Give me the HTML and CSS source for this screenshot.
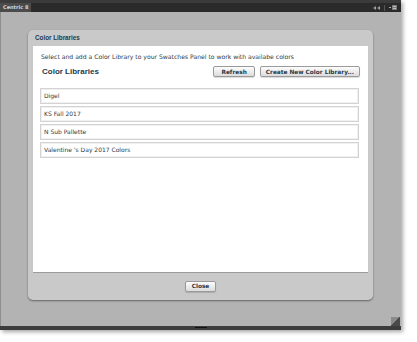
FILE: index.html
```html
<!DOCTYPE html>
<html lang="en">
<head>
  <meta charset="UTF-8" />
  <title>Centric 8 - Color Libraries</title>
  <link rel="stylesheet" href="styles.css">
</head>
<body>
<div class="window">
  <div class="topline"></div>
  <div class="tabbar">
    <div class="tab">Centric 8</div>
    <div class="tab-tools">
      <svg class="collapse" width="7" height="4" viewBox="0 0 7 4"><path d="M3 0L0 2L3 4Z M7 0L4 2L7 4Z" fill="#9a9a9a"/></svg>
      <span class="sep"></span>
      <svg class="menu" width="8" height="5" viewBox="0 0 8 5"><rect x="0" y="2" width="2" height="1" fill="#aaa"/><rect x="3" y="0" width="5" height="5" fill="#7a7a7a"/><rect x="4" y="1" width="3" height="1" fill="#bbb"/><rect x="4" y="3" width="3" height="1" fill="#bbb"/></svg>
    </div>
  </div>

  <div class="panel">
    <div class="dialog">
      <div class="dialog-title">Color Libraries</div>
      <div class="dialog-body">
        <p class="intro">Select and add a Color Library to your Swatches Panel to work with availabe colors</p>
        <div class="head-row">
          <h2>Color Libraries</h2>
          <div class="actions">
            <button class="btn">Refresh</button>
            <button class="btn">Create New Color Library...</button>
          </div>
        </div>
        <ul class="libs">
          <li>Digel</li>
          <li>KS Fall 2017</li>
          <li>N Sub Pallette</li>
          <li>Valentine 's Day 2017 Colors</li>
        </ul>
      </div>
      <div class="dialog-foot">
        <button class="btn">Close</button>
      </div>
    </div>
  </div>

  <div class="bottombar"><span class="grip-notch"></span></div>
  <span class="resize-grip"></span>
</div>
</body>
</html>
```

FILE: styles.css
```css
* { margin: 0; padding: 0; box-sizing: border-box; font-family: 'DejaVu Sans', Verdana, sans-serif; }
body { background: #fff; width: 417px; height: 342px; overflow: hidden; }

.window { position: relative; width: 401px; height: 330px; display: flex; flex-direction: column; box-shadow: 2px 2px 4px rgba(0,0,0,0.35); }
.topline { height: 3px; background: #3b3b3b; }
.tabbar { height: 9px; background: #2a2a2a; display: flex; justify-content: space-between; align-items: center; }
.tab { height: 9px; width: 31px; background: #4b4b4b; color: #d6d6d6; font-size: 5px; font-weight: bold; line-height: 9px; padding-left: 3px; }
.tab-tools { display: flex; align-items: center; gap: 3px; padding-right: 4px; }
.tab-tools .sep { width: 1px; height: 6px; background: #555; margin: 0 1px; }

.panel { flex: 1; background: #b3b3b3; border-left: 1px solid #8e8e8e; padding: 18px 0 0 27px; }
.dialog { width: 345px; height: 270px; background: #c9c9c9; border-radius: 5px; box-shadow: 0 1px 2px rgba(0,0,0,0.45); display: flex; flex-direction: column; }
.dialog-title { height: 16px; line-height: 16px; padding-left: 7px; font-family: 'Liberation Sans', Arial, sans-serif; font-size: 6.3px; font-weight: bold; color: #1f3a4a; }
.dialog-body { height: 227px; margin: 0 5px; background: #fff; border-bottom: 1px solid #9c9c9c; padding: 7px 9px 0 7px; }
.intro { font-size: 6.1px; color: #2d3b44; padding-left: 1px; line-height: 8px; }
.head-row { display: flex; justify-content: space-between; align-items: center; margin-top: 5px; padding-left: 2px; }
.head-row h2 { font-family: 'Liberation Sans', Arial, sans-serif; font-size: 8px; font-weight: bold; color: #1f3a4a; }
.actions { display: flex; gap: 5px; margin-right: -1px; }

.btn { height: 11px; padding: 0 5px; font-size: 5.8px; font-weight: bold; color: #1f3a4a; background: linear-gradient(#fdfdfd, #dcdcdc); border: 1px solid #9a9a9a; border-radius: 2px; box-shadow: 0 1px 1px rgba(0,0,0,0.15); }
.actions .btn:first-child { padding: 0 7px; }

.libs { list-style: none; margin-top: 11px; display: flex; flex-direction: column; gap: 2px; }
.libs li { height: 16px; line-height: 14px; border: 1px solid #d3d3d3; box-shadow: inset 0 0 0 1px #f0f0f0; padding-left: 3px; font-size: 6px; color: #2d3b44; }

.dialog-foot { flex: 1; display: flex; justify-content: center; align-items: center; padding-bottom: 1px; }
.dialog-foot .btn { width: 31px; padding: 0; }

.bottombar { height: 4px; background: #3c3c3c; display: flex; justify-content: center; }
.grip-notch { width: 12px; height: 1px; margin-top: 1px; background: #111; }
.resize-grip { position: absolute; right: 1px; bottom: 4px; width: 9px; height: 9px; background: linear-gradient(135deg, #8a8a8a 50%, #4a4a4a 50%); }
```
